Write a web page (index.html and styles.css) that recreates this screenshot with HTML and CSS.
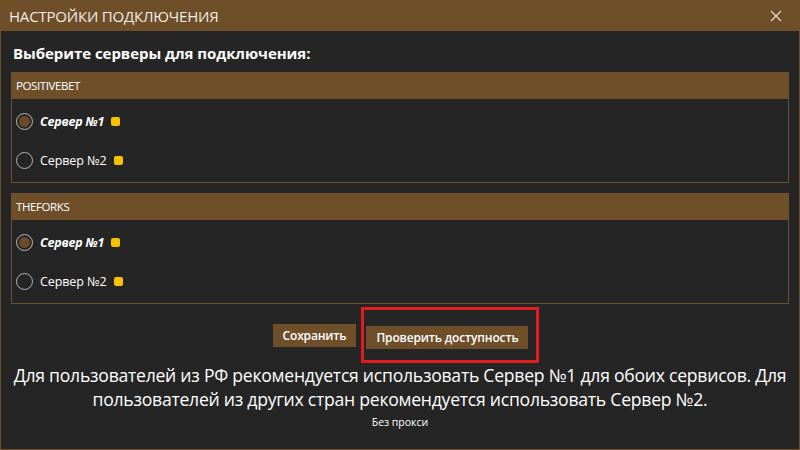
FILE: index.html
```html
<!DOCTYPE html>
<html lang="ru">
<head>
<meta charset="utf-8">
<link rel="stylesheet" href="styles.css">
</head>
<body>
<div class="window">
  <div class="titlebar">
    <span class="title">НАСТРОЙКИ ПОДКЛЮЧЕНИЯ</span>
    <svg class="close" width="12" height="12" viewBox="0 0 12 12"><path d="M1 1L11 11M11 1L1 11" stroke="#e8e0d6" stroke-width="1.1"/></svg>
  </div>
  <div class="content">
    <h1 class="heading">Выберите серверы для подключения:</h1>
    <div class="group">
      <div class="group-head">POSITIVEBET</div>
      <div class="group-body">
        <div class="option selected"><span class="radio"></span><span class="label">Сервер №1</span><span class="status"></span></div>
        <div class="option"><span class="radio"></span><span class="label">Сервер №2</span><span class="status"></span></div>
      </div>
    </div>
    <div class="group">
      <div class="group-head">THEFORKS</div>
      <div class="group-body">
        <div class="option selected"><span class="radio"></span><span class="label">Сервер №1</span><span class="status"></span></div>
        <div class="option"><span class="radio"></span><span class="label">Сервер №2</span><span class="status"></span></div>
      </div>
    </div>
    <div class="actions">
      <button class="btn">Сохранить</button>
      <span class="highlight"><button class="btn">Проверить доступность</button></span>
    </div>
    <p class="note">Для пользователей из РФ рекомендуется использовать Сервер №1 для обоих сервисов. Для пользователей из других стран рекомендуется использовать Сервер №2.</p>
    <p class="proxy">Без прокси</p>
  </div>
</div>
</body>
</html>
```
FILE: styles.css
```css
* { box-sizing: border-box; }
html, body { margin: 0; padding: 0; }
body {
  width: 800px; height: 450px; overflow: hidden;
  background: #252525;
  font-family: "Open Sans", "Noto Sans", sans-serif;
  color: #fff;
}
.window {
  width: 800px; height: 450px;
  border: 1px solid #6e4f2a;
  border-top: none;
  display: flex; flex-direction: column;
}
.titlebar {
  height: 31px;
  margin: 0 -1px;
  background: #6e4f2a;
  display: flex; align-items: center; justify-content: space-between;
  padding: 0 18px 0 9px;
}
.title { font-size: 15px; color: #f2ece4; font-weight: 400; letter-spacing: -0.2px; }
.close { display: block; }
.content {
  padding: 9px 10px 0 10px;
  display: flex; flex-direction: column;
}
.heading {
  margin: 0 0 6px 2px;
  font-size: 15px; font-weight: 700; line-height: 26px;
  letter-spacing: -0.05px;
}
.group {
  border: 1px solid #6e4f2a;
  margin-bottom: 10px;
  height: 111px;
}
.group + .group { margin-bottom: 3px; }
.group-head {
  height: 26px; background: #6e4f2a;
  font-size: 11.5px; line-height: 26px;
  padding-left: 4px; letter-spacing: -0.4px;
}
.group-body { padding-top: 3px; }
.option {
  height: 39px;
  display: flex; align-items: center;
  padding-left: 4px;
}
.radio {
  width: 17px; height: 17px; border-radius: 50%;
  border: 1.5px solid #b5b5b5;
  margin-right: 7px;
}
.selected .radio { background: #6b4a29; box-shadow: inset 0 0 0 2px #252525; }
.label { font-size: 12.5px; color: #fff; letter-spacing: -0.1px; }
.selected .label { font-weight: 700; font-style: italic; letter-spacing: -0.2px; }
.status {
  width: 9px; height: 9px; border-radius: 2px;
  background: #f7c300; margin-left: 7px;
}
.actions {
  display: flex; justify-content: center; align-items: center;
  gap: 5px;
  padding-left: 12px;
}
.btn {
  background: #6e4f2a; color: #fff; border: none;
  font-family: inherit; font-size: 12px; font-weight: 600;
  height: 23px; padding: 0 10px;
  letter-spacing: -0.15px;
}
.highlight {
  border: 3px solid #e21b1f;
  padding: 15px 8px 11px 2px;
}
.note {
  margin: 0;
  text-align: center;
  font-size: 17.6px; line-height: 24px;
  letter-spacing: -0.25px;
}
.proxy {
  margin: 4px 0 0;
  text-align: center; font-size: 10.5px;
}
```
